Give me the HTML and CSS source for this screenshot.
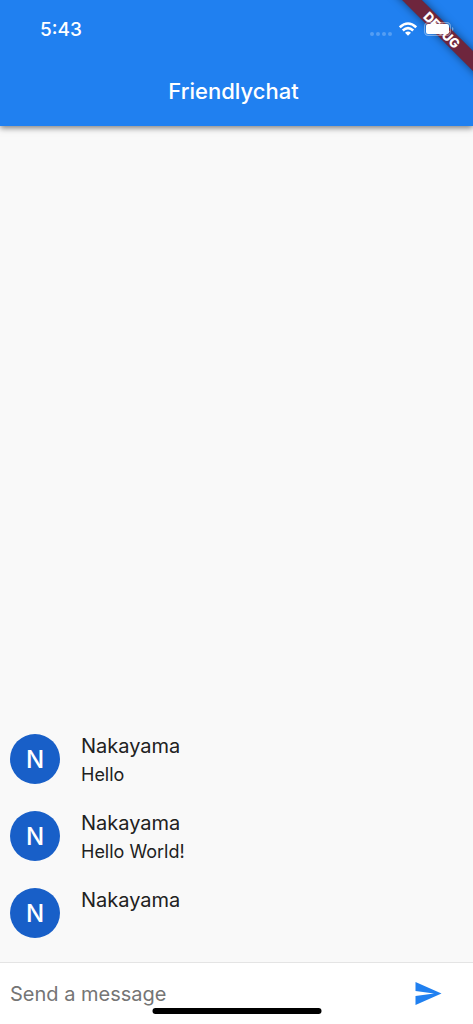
FILE: index.html
```html
<!DOCTYPE html>
<html lang="en">
<head>
<meta charset="utf-8">
<meta name="viewport" content="width=device-width, initial-scale=1">
<title>Friendlychat</title>
<link rel="stylesheet" href="styles.css">
</head>
<body>
<div class="app">
  <header class="header">
    <div class="status">
      <span class="time">5:43</span>
      <div class="indicators">
        <svg class="signal" viewBox="0 0 22 4" aria-hidden="true"><circle cx="2" cy="2" r="2"/><circle cx="8" cy="2" r="2"/><circle cx="14" cy="2" r="2"/><circle cx="20" cy="2" r="2"/></svg>
        <svg class="wifi" viewBox="0 0 18 14" aria-hidden="true">
          <path d="M.8 5.3Q9-2.3 17.2 5.3M3.8 8.5Q9 3.8 14.2 8.5" fill="none" stroke="#fff" stroke-width="2.6"/>
          <path d="M9 13.8 6 10.8Q9 8.3 12 10.8Z" fill="#fff"/>
        </svg>
        <svg class="battery" viewBox="0 0 30 14" aria-hidden="true">
          <rect x=".6" y=".6" width="25.8" height="12.8" rx="3.6" fill="none" stroke="#fff" stroke-opacity=".4" stroke-width="1.1"/>
          <rect x="2" y="2" width="23" height="10" rx="2" fill="#fff"/>
          <path d="M28 5v4q1.5-.6 1.5-2T28 5Z" fill="#fff" fill-opacity=".4"/>
        </svg>
      </div>
    </div>
    <h1 class="title">Friendlychat</h1>
    <div class="corner"><span class="banner">DEBUG</span></div>
  </header>
  <main class="messages">
    <article class="message">
      <div class="avatar">N</div>
      <div class="content"><h2 class="name">Nakayama</h2><p class="text">Hello</p></div>
    </article>
    <article class="message">
      <div class="avatar">N</div>
      <div class="content"><h2 class="name">Nakayama</h2><p class="text">Hello World!</p></div>
    </article>
    <article class="message">
      <div class="avatar">N</div>
      <div class="content"><h2 class="name">Nakayama</h2></div>
    </article>
  </main>
  <form class="composer">
    <input class="field" type="text" placeholder="Send a message" aria-label="Send a message">
    <button class="send" type="button" aria-label="Send">
      <svg viewBox="0 0 26 23" aria-hidden="true"><path d="M0 23 26 11.5 0 0v9l18.5 2.5L0 14Z"/></svg>
    </button>
    <div class="home"></div>
  </form>
</div>
</body>
</html>
```
FILE: styles.css
```css
* { box-sizing: border-box; }
body { margin: 0; font-family: Inter, "Liberation Sans", sans-serif; color: #212121; background: #f9f9f9; }
h1, h2, p { margin: 0; font-weight: 400; }
.app { display: flex; flex-direction: column; min-height: 100vh; }
.header { position: relative; background: #2080f0; color: #fff; box-shadow: 0 2px 6px rgba(0, 0, 0, .5); }
.status { position: relative; z-index: 1; display: flex; align-items: center; justify-content: space-between; height: 58px; padding: 0 19px 0 40px; }
.time { font-size: 19px; font-weight: 500; }
.indicators { display: flex; align-items: center; gap: 7px; }
.signal { width: 22px; height: 4px; margin-top: 9px; fill: #fff; fill-opacity: .24; }
.wifi { width: 18px; height: 14px; }
.battery { width: 30px; height: 14px; }
.title { height: 68px; padding-right: 6px; line-height: 66px; text-align: center; font-size: 22px; font-weight: 500; }
.corner { position: absolute; top: 0; right: 0; width: 90px; height: 90px; overflow: hidden; }
.banner { position: absolute; top: 23px; right: -30px; width: 122px; height: 14px; line-height: 14px; text-align: center; font-size: 13px; font-weight: 800; background: rgba(122, 24, 34, .87); box-shadow: 0 0 8px rgba(0, 0, 0, .5); transform: rotate(45deg); }
.messages { flex: 1; display: flex; flex-direction: column; justify-content: flex-end; gap: 20px; padding: 10px 10px 17px; }
.message { display: flex; gap: 21px; min-height: 57px; }
.avatar { flex: none; width: 50px; height: 50px; border-radius: 50%; background: #185fc8; color: #fff; line-height: 52px; text-align: center; font-size: 24px; font-weight: 500; }
.name { font-size: 20px; line-height: 24px; }
.text { margin-top: 6px; font-size: 18px; line-height: 22px; }
.composer { position: relative; display: flex; align-items: center; height: 62px; padding: 0 31px 0 10px; background: #fff; border-top: 1px solid #e4e4e4; }
.field { flex: 1; min-width: 0; padding: 0; border: 0; outline: 0; background: none; font: inherit; font-size: 20px; color: #212121; }
.field::placeholder { color: #757575; opacity: 1; }
.send { display: flex; padding: 0; border: 0; background: none; }
.send svg { width: 27px; height: 23px; fill: #2080f0; }
.home { position: absolute; bottom: 10px; left: 50%; width: 169px; height: 6px; border-radius: 3px; background: #000; transform: translateX(-50%); }
```
